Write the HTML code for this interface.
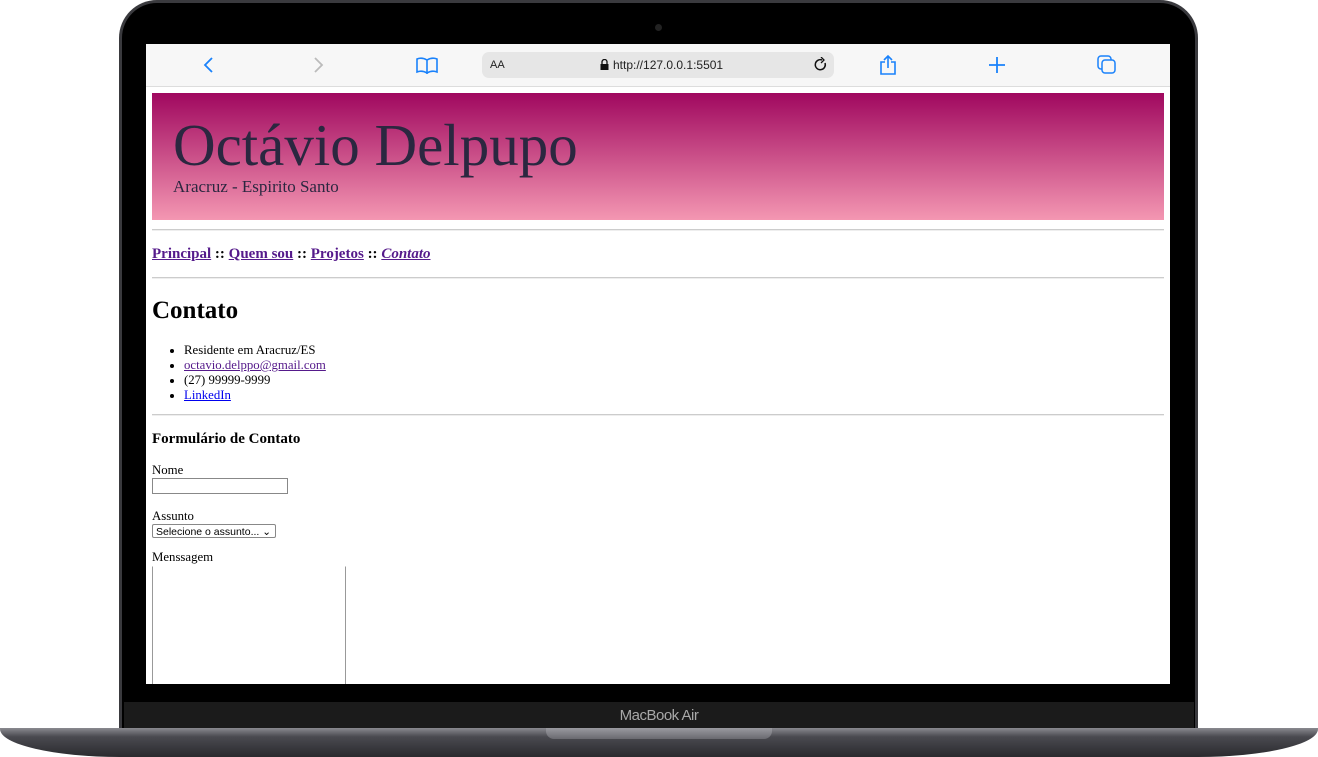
<!DOCTYPE html>
<html><head><meta charset="utf-8"><style>
*{margin:0;padding:0;box-sizing:border-box}
body{width:1318px;height:757px;background:#fff;position:relative;overflow:hidden;font-family:"Liberation Serif",serif}
.lid{position:absolute;left:119px;top:0;width:1079px;height:732px;background:#000;border-radius:38px 38px 0 0;border:3px solid #3a3a3e;border-bottom:none}
.chin{position:absolute;left:124px;top:702px;width:1070px;height:27px;background:#1b1b1b}
.mb{position:absolute;left:0;width:1318px;top:707px;text-align:center;color:#a8a8a8;font:15px "Liberation Sans",sans-serif;letter-spacing:-0.5px}
.base{position:absolute;left:0;top:728px;width:1318px;height:29px;background:linear-gradient(#8a8a90,#4a4a50 30%,#2a2a2e);border-radius:0 0 120px 120px/0 0 28px 28px}
.notch{position:absolute;left:546px;top:728px;width:226px;height:11px;background:linear-gradient(#9a9aa0,#6a6a70);border-radius:0 0 8px 8px}
.cam{position:absolute;left:655px;top:24px;width:7px;height:7px;border-radius:50%;background:#222}
.screen{position:absolute;left:146px;top:44px;width:1024px;height:640px;background:#fff;overflow:hidden}
.bar{position:absolute;left:0;top:0;width:1024px;height:43px;background:#f7f7f7;border-bottom:1px solid #ddd}
.url{position:absolute;left:336px;top:8px;width:352px;height:26px;background:#e6e6e6;border-radius:7px;font:12px "Liberation Sans",sans-serif;color:#222}
.hd{position:absolute;left:6px;top:49px;width:1012px;height:127px;background:linear-gradient(#a0085f,#f497b2)}
.hd h1{position:absolute;left:21px;top:18px;font-size:59px;font-weight:normal;color:#2b2740;white-space:nowrap}
.hd p{position:absolute;left:21px;top:84px;font-size:17px;color:#2b2740}
.hr{position:absolute;left:6px;width:1012px;height:2px;background:#ccc;border-bottom:1px solid #eee}
a{color:#551a8b}
.t{position:absolute;left:6px;white-space:nowrap}
</style></head><body>
<div class="lid"></div><div class="cam"></div>
<div class="chin"></div><div class="mb">MacBook Air</div>
<div class="base"></div><div class="notch"></div>
<div class="screen">
 <div class="bar">
  <svg style="position:absolute;left:56px;top:12px" width="14" height="18"><path d="M10 2 3 9l7 7" stroke="#1a82fb" stroke-width="1.8" fill="none"/></svg>
  <svg style="position:absolute;left:165px;top:12px" width="14" height="18"><path d="M4 2l7 7-7 7" stroke="#bbb" stroke-width="1.8" fill="none"/></svg>
  <svg style="position:absolute;left:270px;top:13px" width="22" height="17"><path d="M1 2q5-2 10 1v13q-5-3-10-1zM21 2q-5-2-10 1v13q5-3 10-1z" stroke="#1a82fb" stroke-width="1.6" fill="none"/></svg>
  <div class="url"><span style="position:absolute;left:8px;top:7px;font-size:11px">AA</span>
   <svg style="position:absolute;left:118px;top:7px" width="9" height="11"><rect x="0.5" y="5" width="8" height="6" fill="#111"/><path d="M2 5V3a2.5 2.5 0 015 0v2" stroke="#111" fill="none" stroke-width="1.3"/></svg>
   <span style="position:absolute;left:131px;top:6px">http://127.0.0.1:5501</span>
   <svg style="position:absolute;left:332px;top:5px" width="14" height="16"><path d="M11 6a5 5 0 1 1-3-3" stroke="#111" stroke-width="1.5" fill="none"/><path d="M7 0l3 3-3 3" stroke="#111" stroke-width="1.3" fill="none"/></svg>
  </div>
  <svg style="position:absolute;left:733px;top:10px" width="18" height="22"><path d="M6 8H2v12h14V8h-4M9 14V2M5 6l4-4 4 4" stroke="#1a82fb" stroke-width="1.6" fill="none"/></svg>
  <svg style="position:absolute;left:843px;top:13px" width="16" height="16"><path d="M8 0v16M0 8h16" stroke="#1a82fb" stroke-width="1.8"/></svg>
  <svg style="position:absolute;left:951px;top:11px" width="20" height="20"><rect x="1" y="1" width="13" height="13" rx="3" stroke="#1a82fb" stroke-width="1.5" fill="none"/><rect x="5" y="5" width="13" height="13" rx="3" stroke="#1a82fb" stroke-width="1.5" fill="#f7f7f7"/></svg>
 </div>
 <div class="hd"><h1>Octávio Delpupo</h1><p>Aracruz - Espirito Santo</p></div>
 <div class="hr" style="top:185px"></div>
 <div class="t" style="top:202px;font-size:15px;font-weight:bold"><a href="#">Principal</a> :: <a href="#">Quem sou</a> :: <a href="#">Projetos</a> :: <a href="#"><i>Contato</i></a></div>
 <div class="hr" style="top:233px"></div>
 <div class="t" style="top:253px;font-size:25px;font-weight:bold">Contato</div>
 <ul style="position:absolute;left:38px;top:299px;font-size:12.8px;line-height:15px">
  <li>Residente em Aracruz/ES</li><li><a href="#">octavio.delppo@gmail.com</a></li><li>(27) 99999-9999</li><li><a href="#" style="color:#00e">LinkedIn</a></li></ul>
 <div class="hr" style="top:370px"></div>
 <div class="t" style="top:387px;font-size:15px;font-weight:bold">Formulário de Contato</div>
 <div class="t" style="top:419px;font-size:12.8px">Nome</div>
 <div style="position:absolute;left:6px;top:434px;width:136px;height:16px;border:1px solid #888"></div>
 <div class="t" style="top:465px;font-size:12.8px">Assunto</div>
 <div style="position:absolute;left:6px;top:480px;width:124px;height:14px;border:1px solid #888;border-radius:2px;font:10.5px 'Liberation Sans',sans-serif;padding:1px 3px;white-space:nowrap">Selecione o assunto... ⌄</div>
 <div class="t" style="top:506px;font-size:12.8px">Menssagem</div>
 <div style="position:absolute;left:6px;top:522px;width:194px;height:140px;border:1px solid #999;border-top-color:#fff"></div>
</div>
</body></html>
